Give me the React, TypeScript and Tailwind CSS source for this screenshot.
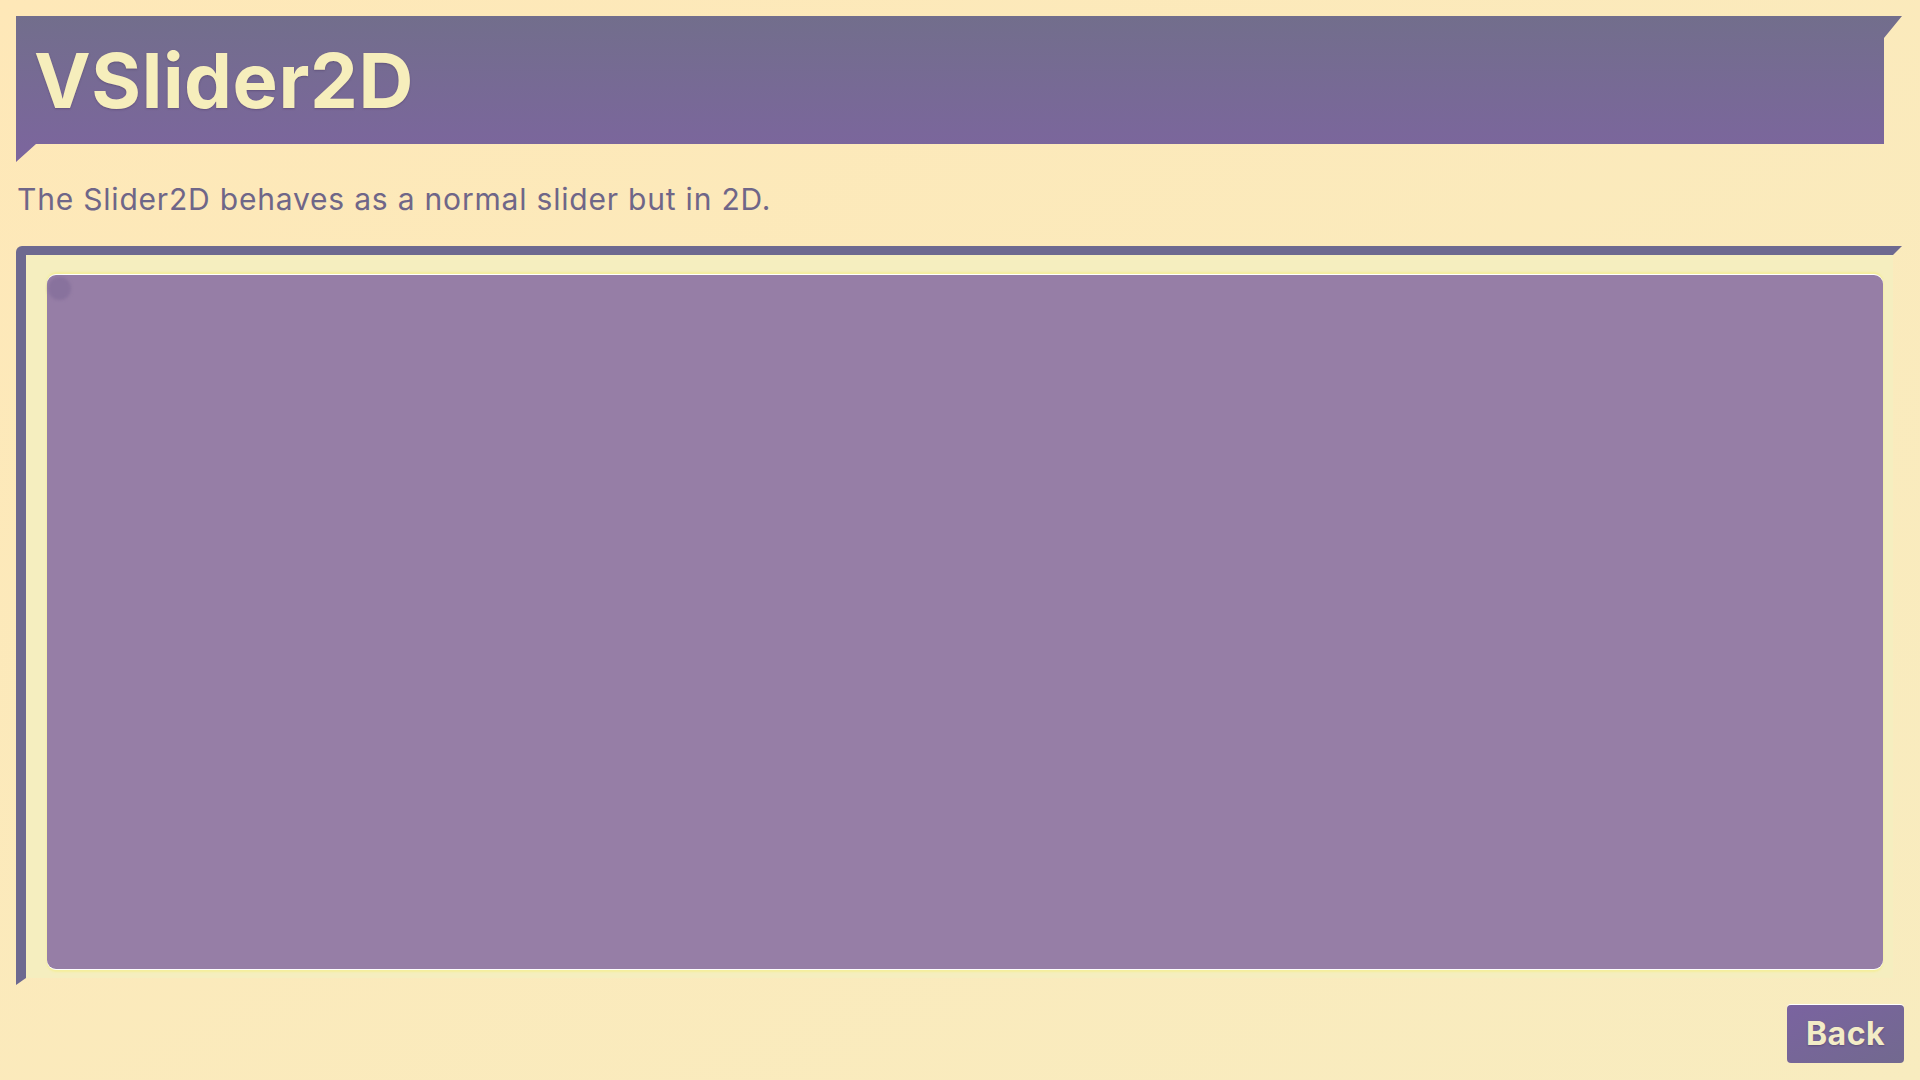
export default function App() {
  return (
    <div className="min-h-screen w-full bg-gradient-to-br from-[#fee8b8] to-[#f8ecbf] px-4 pt-4 pb-[17px] font-['Inter',sans-serif] flex flex-col">
      {/* title ribbon */}
      <div className="mr-[2px] h-[146px] bg-gradient-to-b from-[#726e8c] to-[#7c659e] [clip-path:polygon(0_0,100%_0,calc(100%-18px)_22px,calc(100%-18px)_128px,20px_128px,0_146px)]">
        <div className="h-[128px] flex items-center pl-[18px]">
          <h1 className="text-[76px] font-bold leading-none tracking-[0.6px] text-[#f6eebc] [text-shadow:0_1px_2px_rgba(60,40,80,0.35)]">
            VSlider2D
          </h1>
        </div>
      </div>

      <p className="mt-[17px] pl-[1px] text-[30px] leading-[40px] text-[#6f6688] tracking-[0.8px]">
        The Slider2D behaves as a normal slider but in 2D.
      </p>

      {/* slider frame */}
      <div className="mt-[27px] mr-[2px] border-t-[9px] border-l-[10px] border-r-[9px] border-b-[7px] border-t-[#6d6990] border-l-[#6d6990] border-r-transparent border-b-transparent rounded-tl-[6px] bg-[#f5eebf] bg-clip-padding pt-5 pl-[21px] pr-[10px] pb-[9px]">
        <div className="relative h-[694px] rounded-[9px] bg-[#967ea6] shadow-[0_-1px_0_#fff,0_-3px_2px_#f4ee9c,0_1px_0_#fff,0_3px_2px_#f4ee9c]">
          <div className="absolute left-[1px] top-[2px] h-[23px] w-[23px] rounded-full bg-[#88729d] blur-[1.5px]" />
        </div>
      </div>

      <div className="mt-5 flex justify-end">
        <button className="h-[58px] w-[117px] rounded-[4px] bg-gradient-to-br from-[#7a63a0] to-[#72698f] text-[32px] font-bold tracking-[0.5px] text-[#f3ecc6] [text-shadow:0_1px_2px_rgba(60,40,80,0.4)] shadow-[0_-1px_0_#fff]">
          Back
        </button>
      </div>
    </div>
  );
}
